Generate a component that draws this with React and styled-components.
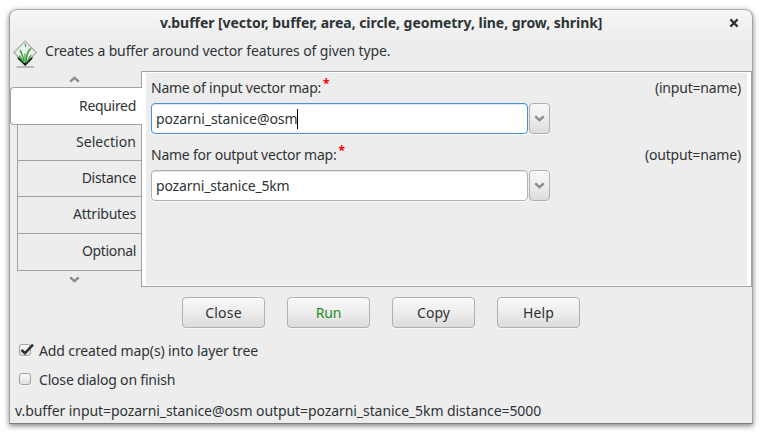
import React from "react";
import styled, { createGlobalStyle, css } from "styled-components";

const GlobalStyle = createGlobalStyle`
  * { box-sizing: border-box; }
  body {
    margin: 0;
    background: #fff;
    color: #2e3436;
    font: 14px/20px "Noto Sans", "Open Sans", sans-serif;
  }
`;

const Desktop = styled.div`
  height: 436px;
  padding: 9px 0 0 9px;
  overflow: hidden;
`;

const Window = styled.main`
  width: 744px;
  height: 415px;
  display: flex;
  flex-direction: column;
  border: 1px solid #a2a2a2;
  border-top-color: #b0b0b0;
  border-bottom-color: #7c7c7c;
  border-radius: 8px 8px 0 0;
  background: linear-gradient(#f7f7f7, #ededed 28px);
  box-shadow: 0 2px 5px rgba(0, 0, 0, 0.42), 0 1px 8px rgba(0, 0, 0, 0.1);
`;

const Text = styled.span`
  white-space: pre;
  letter-spacing: ${(p) => p.$track || 0}px;
`;

const TitleBar = styled.header`
  height: 26px;
  flex: none;
  display: flex;
  padding: 3px 13px 0 150px;
  justify-content: space-between;
  font-weight: 700;
`;

const CloseButton = styled.button`
  width: 10px;
  height: 10px;
  margin-top: 5px;
  padding: 0;
  border: 0;
  background: none;
  svg { display: block; }
`;

const Description = styled.div`
  height: 35px;
  flex: none;
  display: flex;
  gap: 7px;
  padding: 4px 0 0 3px;
  svg { flex: none; }
  ${Text} { margin-top: 1px; }
`;

const Notebook = styled.section`
  display: flex;
  height: 216px;
  flex: none;
`;

const TabColumn = styled.nav`
  width: 131px;
  display: flex;
  flex-direction: column;
`;

const TabScroller = styled.div`
  height: 16px;
  flex: none;
  display: flex;
  align-items: center;
  justify-content: center;
  padding-right: 2px;
`;

const Tab = styled.div`
  height: ${(p) => p.$height}px;
  flex: none;
  margin-left: 7px;
  padding: 7px 5px 0 0;
  text-align: right;
  border: solid #a1a1a1;
  border-width: 0 0 1px 1px;
  ${(p) =>
    p.$active &&
    css`
      position: relative;
      margin: 0 -1px 0 0;
      padding: 8px 6px 0 0;
      border-width: 1px 0 1px 1px;
      border-radius: 4px 0 0 4px;
      background: #fff;
    `}
`;

const Page = styled.div`
  width: 611px;
  border: 1px solid #a1a1a1;
  background: #fff;
  padding: 1px 4px;
`;

const PageBody = styled.div`
  height: 100%;
  padding: 5px 6px 0 5px;
  display: flex;
  flex-direction: column;
  gap: 11px;
  background: #ededed;
`;

const Field = styled.div`
  display: flex;
  flex-direction: column;
  gap: 5px;
`;

const FieldHeader = styled.div`
  display: flex;
  height: 20px;
`;

const Required = styled.span`
  margin: -4px 0 0 2px;
  color: #f00;
  font-size: 12px;
  font-weight: 700;
`;

const Hint = styled(Text)`
  margin-left: auto;
`;

const Combo = styled.div`
  display: flex;
  gap: 1px;
  height: 31px;
`;

const Entry = styled.div`
  width: 377px;
  display: flex;
  padding: 5px 4px 0;
  border: 1px solid ${(p) => (p.$focused ? "#4a90d9" : "#b2b2b2")};
  border-radius: 4px;
  background: #fff;
  box-shadow: inset 0 1px 0 ${(p) => (p.$focused ? "#dce9f7" : "#e3e3e3")}, 0 1px 0 #f8f8f8;
`;

const Caret = styled.i`
  width: 1px;
  height: 20px;
  background: #000;
`;

const raised = css`
  border: 1px solid #b0b0b0;
  border-radius: 4px;
  background: linear-gradient(#f8f8f8, #ededed 50%, #dcdcdc);
  box-shadow: inset 0 1px 0 #fbfbfb, 0 1px 0 #f8f8f8;
`;

const DropButton = styled.button`
  ${raised}
  width: 21px;
  padding: 0;
  display: flex;
  align-items: center;
  justify-content: center;
`;

const Actions = styled.div`
  display: flex;
  flex: none;
  gap: 22px;
  padding: 10px 0 0 172px;
`;

const ActionButton = styled.button`
  ${raised}
  width: 83px;
  height: 31px;
  padding: 0;
  color: ${(p) => (p.$primary ? "#239023" : "#2e3436")};
  font: inherit;
  line-height: 30px;
`;

const Options = styled.div`
  display: flex;
  flex-direction: column;
  gap: 9px;
  padding: 13px 0 0 9px;
`;

const Option = styled.label`
  display: flex;
  gap: 8px;
  height: 20px;
`;

const Box = styled.span`
  width: 12px;
  height: 12px;
  margin-top: 3px;
  border: 1px solid #a0a0a0;
  border-radius: 3px;
  background: linear-gradient(#fafafa, #e0e0e0);
  box-shadow: 0 1px 0 #f8f8f8;
  svg { display: block; overflow: visible; }
`;

const Status = styled.footer`
  padding: 11px 0 0 5px;
`;

const Chevron = ({ up }) => (
  <svg width="11" height="7" viewBox="0 0 11 7" fill="none" stroke="#8b8b89" strokeWidth="2.4">
    <path d={up ? "M1.2 5.6 5.5 1.8 9.8 5.6" : "M1.2 1.4 5.5 5.2 9.8 1.4"} />
  </svg>
);

const GrassLogo = () => (
  <svg width="25" height="28" viewBox="0 0 25 28">
    <path d="M12 1.2 23.3 12.5 12 23.8.9 12.5Z" fill="#eef0ee" stroke="#a3a8a3" strokeWidth="1.1" />
    <path d="M4.4 16.4 12 23 19.8 16.4 19.2 19 12.2 26 5 19Z" fill="#111" />
    <g fill="none" stroke="#2f9f35" strokeLinecap="round">
      <path d="M11 22.5C10.5 18 9.3 14.5 7.3 10.5M12.9 22.5C13 16 14.5 12 17.4 8.8" strokeWidth="1.6" />
      <path d="M9.4 21.5C8.7 19 7.6 17.2 6.4 16M14.6 21.5C15.3 18.8 16.5 16.7 18 15.4" strokeWidth="1.2" />
      <path d="M12 20.5V14M12 3.8 12.8 6.6" strokeWidth="1.1" />
    </g>
    <path d="M3.5 27H21" stroke="#a2a8a2" strokeWidth="1.4" />
  </svg>
);

const tabs = [
  { label: "Required", track: -0.311, height: 38, active: true },
  { label: "Selection", track: 0.045, height: 36 },
  { label: "Distance", track: -0.3, height: 36 },
  { label: "Attributes", track: -0.237, height: 37 },
  { label: "Optional", track: -0.35, height: 37 },
];

const fields = [
  { label: "Name of input vector map:", track: -0.25, hint: "(input=name)", hintTrack: -0.2, value: "pozarni_stanice@osm", valueTrack: -0.08, focused: true },
  { label: "Name for output vector map:", track: -0.24, hint: "(output=name)", hintTrack: -0.18, value: "pozarni_stanice_5km", valueTrack: -0.18 },
];

const actions = [
  { label: "Close", track: 0.2 },
  { label: "Run", track: -0.2, primary: true },
  { label: "Copy", track: 0.05 },
  { label: "Help", track: 0.13 },
];

export default function App() {
  return (
    <Desktop>
      <GlobalStyle />
      <Window>
        <TitleBar>
          <Text $track={-0.045}>v.buffer [vector, buffer, area, circle, geometry, line, grow, shrink]</Text>
          <CloseButton aria-label="Close window">
            <svg width="10" height="10" viewBox="0 0 10 10">
              <path d="M1.4 1.4 8.6 8.6M8.6 1.4 1.4 8.6" stroke="#2e3436" strokeWidth="2.2" />
            </svg>
          </CloseButton>
        </TitleBar>
        <Description>
          <GrassLogo />
          <Text $track={-0.125}>Creates a buffer around vector features of given type.</Text>
        </Description>
        <Notebook>
          <TabColumn>
            <TabScroller><Chevron up /></TabScroller>
            {tabs.map((t) => (
              <Tab key={t.label} $height={t.height} $active={t.active}>
                <Text $track={t.track}>{t.label}</Text>
              </Tab>
            ))}
            <TabScroller><Chevron /></TabScroller>
          </TabColumn>
          <Page>
            <PageBody>
              {fields.map((f) => (
                <Field key={f.label}>
                  <FieldHeader>
                    <Text $track={f.track}>{f.label}</Text>
                    <Required>*</Required>
                    <Hint $track={f.hintTrack}>{f.hint}</Hint>
                  </FieldHeader>
                  <Combo>
                    <Entry $focused={f.focused}>
                      <Text $track={f.valueTrack}>{f.value}</Text>
                      {f.focused && <Caret />}
                    </Entry>
                    <DropButton aria-label="Open list"><Chevron /></DropButton>
                  </Combo>
                </Field>
              ))}
            </PageBody>
          </Page>
        </Notebook>
        <Actions>
          {actions.map((a) => (
            <ActionButton key={a.label} $primary={a.primary}>
              <Text $track={a.track}>{a.label}</Text>
            </ActionButton>
          ))}
        </Actions>
        <Options>
          <Option>
            <Box>
              <svg width="14" height="11" viewBox="0 0 14 11">
                <path d="M1.5 5 5 8.2 13-.3" fill="none" stroke="#2e3436" strokeWidth="2.6" />
              </svg>
            </Box>
            <Text $track={-0.115}>Add created map(s) into layer tree</Text>
          </Option>
          <Option>
            <Box />
            <Text $track={-0.19}>Close dialog on finish</Text>
          </Option>
        </Options>
        <Status>
          <Text $track={-0.077}>v.buffer input=pozarni_stanice@osm output=pozarni_stanice_5km distance=5000</Text>
        </Status>
      </Window>
    </Desktop>
  );
}
